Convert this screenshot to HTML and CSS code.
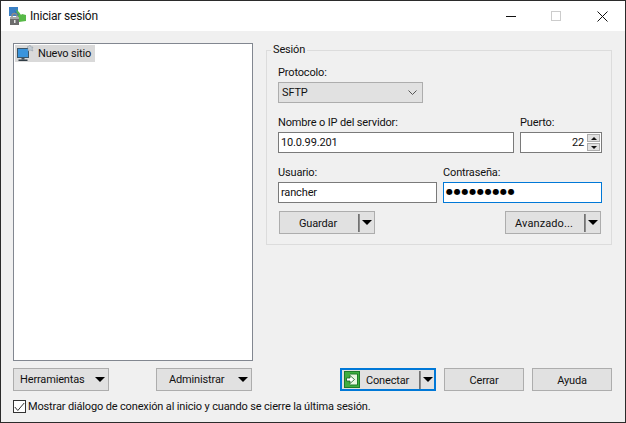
FILE: index.html
```html
<!DOCTYPE html>
<html lang="es">
<head>
    <meta charset="UTF-8">
    <title>Iniciar sesión</title>
    <link rel="stylesheet" href="styles.css">
</head>
<body>
    <div class="window">
        <header class="titlebar">
            <svg class="app-icon" width="18" height="19" viewBox="0 0 18 19">
                <rect x="0" y="0" width="9" height="9" fill="#3a7fc4"/>
                <path d="M7 2l3 3 2 3 1-1 4 1v6l-7 1z" fill="#57b947"/>
                <path d="M5 3l5 5-2 1z" fill="#2e6da8"/>
                <path d="M3 10V9a2.5 2.5 0 0 1 5 0v1" fill="none" stroke="#8a8a8a" stroke-width="1.4"/>
                <rect x="1" y="10" width="9" height="8" fill="#6d6d6d"/>
                <rect x="1" y="10" width="9" height="2" fill="#a8a8a8"/>
                <rect x="5" y="13" width="1.5" height="3" fill="#e4e4e4"/>
            </svg>
            <span class="title">Iniciar sesión</span>
            <div class="win-controls">
                <span class="win-btn"><span class="win-min"></span></span>
                <span class="win-btn"><span class="win-max"></span></span>
                <span class="win-btn">
                    <svg width="11" height="11" viewBox="0 0 11 11"><path d="M.5.5l10 10M10.5.5l-10 10" stroke="#111" fill="none"/></svg>
                </span>
            </div>
        </header>

        <div class="content">
            <div class="main">
                <!-- Site list -->
                <div class="left">
                    <div class="tree">
                        <div class="tree-item">
                            <svg width="18" height="17" viewBox="0 0 18 17">
                                <rect x="1.5" y="3.5" width="11" height="9" fill="#3a94dc" stroke="#3b5568"/>
                                <rect x="5.5" y="13" width="3" height="1.5" fill="#45525c"/>
                                <rect x="2.5" y="14.5" width="9" height="1.5" fill="#2f3b44"/>
                                <path d="M14 0l1 2 2 0-1 2 1 2-3-1-2 1 0-3-1-1 2-1z" fill="#c3ccd4" stroke="#8d99a4" stroke-width=".5"/>
                            </svg>
                            <span>Nuevo sitio</span>
                        </div>
                    </div>
                    <div class="left-buttons">
                        <button class="btn btn-menu">Herramientas<i class="arrow"></i></button>
                        <button class="btn btn-menu">Administrar<i class="arrow"></i></button>
                    </div>
                </div>

                <!-- Session -->
                <div class="right">
                    <fieldset class="session">
                        <legend>Sesión</legend>
                        <div class="field">
                            <label>Protocolo:</label>
                            <div class="select">
                                <span>SFTP</span>
                                <svg width="9" height="5" viewBox="0 0 9 5"><path d="M.5.5l4 4 4-4" fill="none" stroke="#555"/></svg>
                            </div>
                        </div>
                        <div class="row row-host">
                            <div class="field grow">
                                <label>Nombre o IP del servidor:</label>
                                <div class="input">10.0.99.201</div>
                            </div>
                            <div class="field port">
                                <label>Puerto:</label>
                                <div class="input input-port">
                                    <span class="port-value">22</span>
                                    <span class="spin">
                                        <span class="spin-btn"><i class="spin-up"></i></span>
                                        <span class="spin-btn"><i class="spin-down"></i></span>
                                    </span>
                                </div>
                            </div>
                        </div>
                        <div class="row row-user">
                            <div class="field half">
                                <label>Usuario:</label>
                                <div class="input">rancher</div>
                            </div>
                            <div class="field half">
                                <label>Contraseña:</label>
                                <div class="input input-focus dots">●●●●●●●●●</div>
                            </div>
                        </div>
                        <div class="row row-actions">
                            <button class="btn btn-split"><span class="btn-text">Guardar</span><i class="sep"></i><i class="arrow"></i></button>
                            <button class="btn btn-split"><span class="btn-text btn-text-wide">Avanzado...</span><i class="sep"></i><i class="arrow"></i></button>
                        </div>
                    </fieldset>
                    <div class="right-buttons">
                        <button class="btn btn-split btn-default">
                            <svg width="16" height="17" viewBox="0 0 16 17">
                                <rect x=".5" y=".5" width="15" height="16" fill="#3fae3f" stroke="#1d7a2a"/>
                                <path d="M6 3h7.5v11H6" fill="#e8f6e0" stroke="#1d7a2a"/>
                                <path d="M2.5 7H6V4.5l4.5 4L6 12.5V10H2.5z" fill="#fff" stroke="#14601f" stroke-width=".8"/>
                            </svg>
                            <span class="btn-text">Conectar</span><i class="sep"></i><i class="arrow"></i>
                        </button>
                        <button class="btn btn-plain">Cerrar</button>
                        <button class="btn btn-plain">Ayuda</button>
                    </div>
                </div>
            </div>

            <label class="check-row">
                <span class="check">
                    <svg width="11" height="10" viewBox="0 0 11 10"><path d="M.8 5l3 3.5L10.2 1" fill="none" stroke="#333"/></svg>
                </span>
                <span>Mostrar diálogo de conexión al inicio y cuando se cierre la última sesión.</span>
            </label>
        </div>
    </div>
</body>
</html>
```
FILE: styles.css
```css
* {
    box-sizing: border-box;
}

html, body {
    margin: 0;
    height: 100%;
}

body {
    font-family: Roboto, "Noto Sans", sans-serif;
    font-size: 11px;
    letter-spacing: -0.15px;
    color: #111;
    overflow: hidden;
}

.window {
    width: 626px;
    height: 423px;
    background: #f0f0f0;
    border: 1px solid #2b2b2b;
    display: flex;
    flex-direction: column;
}

/* Title bar */
.titlebar {
    height: 30px;
    background: #fff;
    display: flex;
    align-items: center;
    padding-left: 8px;
    flex-shrink: 0;
}

.app-icon {
    margin-right: 3px;
}

.title {
    flex: 1;
    font-size: 12px;
    letter-spacing: -0.2px;
}

.win-controls {
    display: flex;
}

.win-btn {
    width: 46px;
    height: 30px;
    display: flex;
    align-items: center;
    justify-content: center;
}

.win-min {
    width: 10px;
    height: 1px;
    margin-left: 2px;
    background: #111;
}

.win-max {
    width: 10px;
    height: 10px;
    border: 1px solid #ccc;
}

/* Content */
.content {
    flex: 1;
    padding: 12px 13px 0 12px;
    display: flex;
    flex-direction: column;
}

.main {
    display: flex;
    gap: 13px;
}

.left {
    width: 240px;
    flex-shrink: 0;
}

.tree {
    height: 318px;
    background: #fff;
    border: 1px solid #828790;
    padding: 1px;
}

.tree-item {
    display: inline-flex;
    align-items: center;
    gap: 4px;
    height: 17px;
    padding: 0 4px 0 1px;
    background: #d9d9d9;
}

.left-buttons {
    display: flex;
    justify-content: space-between;
    margin-top: 7px;
    padding-right: 1px;
}

.right {
    flex: 1;
}

/* Session group */
.session {
    margin: 0;
    height: 202px;
    padding: 9px 9px 0 11px;
    border: 1px solid #dcdcdc;
    min-width: 0;
}

.session legend {
    padding: 0 2px;
    margin-left: -7px;
    line-height: 14px;
}

.field label {
    display: block;
    height: 16px;
    line-height: 14px;
    white-space: nowrap;
}

.select {
    width: 145px;
    height: 21px;
    background: #e1e1e1;
    border: 1px solid #adadad;
    display: flex;
    align-items: center;
    justify-content: space-between;
    padding: 0 5px 0 3px;
}

.row {
    display: flex;
}

.row-host {
    gap: 6px;
    margin-top: 13px;
}

.row-user {
    gap: 6px;
    margin-top: 13px;
}

.row-actions {
    justify-content: space-between;
    margin-top: 8px;
    padding: 0 1px;
}

.grow {
    width: 236px;
}

.port {
    width: 82px;
}

.half {
    width: 159px;
}

.input {
    height: 21px;
    background: #fff;
    border: 1px solid #7a7a7a;
    padding: 0 2px;
    line-height: 19px;
    white-space: nowrap;
}

.input-focus {
    border-color: #0078d7;
}

.dots {
    font-family: "DejaVu Sans", sans-serif;
    font-size: 8px;
    letter-spacing: 0.75px;
    line-height: 18px;
    color: #000;
}

.input-port {
    display: flex;
    justify-content: flex-end;
    padding: 1px;
    line-height: 17px;
}

.port-value {
    margin-right: 3px;
}

.spin {
    width: 13px;
    display: flex;
    flex-direction: column;
    gap: 1px;
}

.spin-btn {
    flex: 1;
    background: #e1e1e1;
    border: 1px solid #adadad;
    display: flex;
    align-items: center;
    justify-content: center;
}

.spin-up, .spin-down {
    width: 0;
    height: 0;
    border-left: 3px solid transparent;
    border-right: 3px solid transparent;
}

.spin-up {
    border-bottom: 3px solid #111;
}

.spin-down {
    border-top: 3px solid #111;
}

/* Buttons */
.btn {
    font: inherit;
    letter-spacing: inherit;
    line-height: 15px;
    color: #111;
    height: 23px;
    background: #e1e1e1;
    border: 1px solid #adadad;
    padding: 0;
    display: flex;
    align-items: center;
}

.btn-menu {
    width: 96px;
    justify-content: space-between;
    padding: 0 3px 0 6px;
}

.btn-menu:last-child {
    padding-left: 12px;
}

.btn-split {
    width: 96px;
    padding-right: 1px;
}

.btn-text {
    flex: 1;
    text-align: center;
    padding-top: 1px;
    padding-right: 2px;
}

.btn-text-wide {
    letter-spacing: 0.1px;
}

.sep {
    width: 2px;
    height: 18px;
    background: linear-gradient(to right, #666, #999);
    margin-right: 2px;
}

.arrow {
    width: 0;
    height: 0;
    border-left: 5px solid transparent;
    border-right: 5px solid transparent;
    border-top: 5px solid #000;
}

.btn-split .arrow {
    margin-right: 1px;
}

.right-buttons {
    display: flex;
    justify-content: flex-end;
    gap: 8px;
    margin-top: 123px;
}

.btn-plain {
    width: 80px;
    justify-content: center;
    padding-top: 1px;
}

.btn-default {
    border: 2px solid #0078d7;
    padding-left: 2px;
    padding-right: 0;
}

.btn-default .btn-text {
    padding-right: 4px;
}

/* Checkbox */
.check-row {
    display: flex;
    align-items: center;
    gap: 2px;
    margin-top: 9px;
    white-space: nowrap;
}

.check {
    width: 13px;
    height: 13px;
    background: #fff;
    border: 1px solid #333;
    display: flex;
    align-items: center;
    justify-content: center;
}
```
